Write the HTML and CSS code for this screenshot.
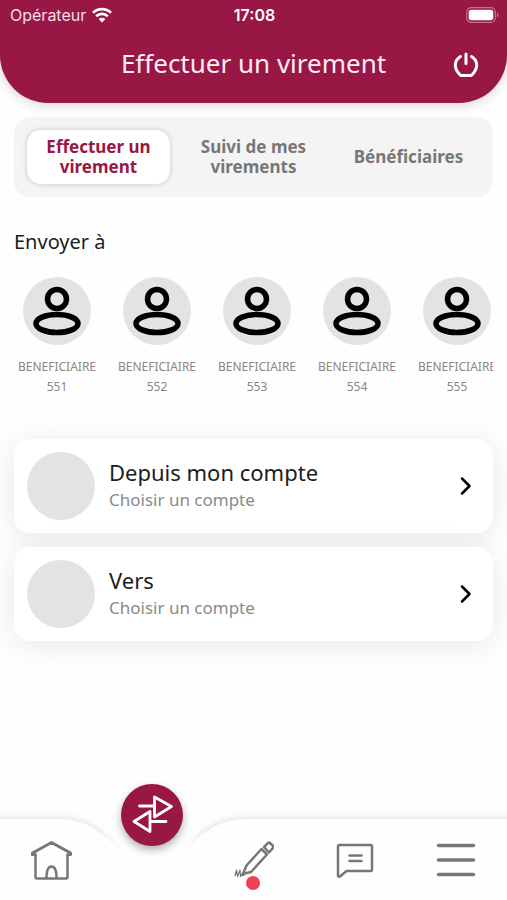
FILE: index.html
```
<!DOCTYPE html>
<html lang="fr">
<head>
<meta charset="utf-8">
<meta name="viewport" content="width=device-width, initial-scale=1">
<title>Effectuer un virement</title>
<link rel="stylesheet" href="styles.css">
</head>
<body>
<svg class="defs" width="0" height="0" aria-hidden="true">
  <symbol id="person" viewBox="0 0 68 68">
    <g fill="none" stroke="#000" stroke-width="5.500">
      <circle cx="34" cy="22" r="9.500"/>
      <ellipse cx="34" cy="46.500" rx="21" ry="9"/>
    </g>
  </symbol>
  <symbol id="chevron" viewBox="0 0 12 20">
    <path d="M2 2.500 9.500 10 2 17.500" fill="none" stroke="#000" stroke-width="2.500" stroke-linecap="round" stroke-linejoin="round"/>
  </symbol>
</svg>
<div class="app">
  <header class="header">
    <div class="status">
      <span class="carrier">Opérateur
        <svg width="20" height="16" viewBox="0 0 20 16" aria-hidden="true"><g fill="none" stroke="#fff" stroke-width="2.600"><path d="M1 5.700a13 13 0 0 1 18 0"/><path d="M4.200 9.200a8.300 8.300 0 0 1 11.600 0"/></g><path d="M10 15.500 6.600 12a4.900 4.900 0 0 1 6.800 0z" fill="#fff"/></svg>
      </span>
      <span class="time">17:08</span>
      <svg class="battery" width="33" height="16" viewBox="0 0 33 16" aria-hidden="true"><rect x=".7" y=".7" width="28.600" height="14.600" rx="4.500" fill="none" stroke="#c4718e" stroke-width="1.200"/><rect x="2.700" y="2.700" width="24.600" height="10.600" rx="2.800" fill="#fff"/><path d="M31 5.500q1.600.8 1.600 2.500T31 10.500z" fill="#c4718e"/></svg>
    </div>
    <div class="titlebar">
      <h1>Effectuer un virement</h1>
      <button class="power" aria-label="Se déconnecter">
        <svg width="26" height="26" viewBox="0 0 26 26"><g fill="none" stroke="#fff" stroke-width="3" stroke-linecap="round"><path d="M13 2V11.500"/><path d="M7.500 4.500C4.300 6.500 2.300 9.500 2.300 13.300c0 3.900 2 7 5.400 10.200h10.600c3.400-3.200 5.400-6.300 5.400-10.200 0-3.800-2-6.800-5.200-8.800" stroke-linejoin="round"/></g></svg>
      </button>
    </div>
  </header>
  <main>
    <nav class="tabs" aria-label="Virements">
      <button class="tab active">Effectuer un virement</button>
      <button class="tab">Suivi de mes virements</button>
      <button class="tab">Bénéficiaires</button>
    </nav>
    <h2>Envoyer à</h2>
    <div class="people">
      <button class="person"><svg class="avatar" aria-hidden="true"><use href="#person"/></svg><span>BENEFICIAIRE 551</span></button>
      <button class="person"><svg class="avatar" aria-hidden="true"><use href="#person"/></svg><span>BENEFICIAIRE 552</span></button>
      <button class="person"><svg class="avatar" aria-hidden="true"><use href="#person"/></svg><span>BENEFICIAIRE 553</span></button>
      <button class="person"><svg class="avatar" aria-hidden="true"><use href="#person"/></svg><span>BENEFICIAIRE 554</span></button>
      <button class="person"><svg class="avatar" aria-hidden="true"><use href="#person"/></svg><span>BENEFICIAIRE 555</span></button>
    </div>
    <div class="accounts">
      <button class="account">
        <span class="avatar"></span>
        <span class="label"><span class="name">Depuis mon compte</span><span class="hint">Choisir un compte</span></span>
        <svg width="12" height="20" aria-hidden="true"><use href="#chevron"/></svg>
      </button>
      <button class="account">
        <span class="avatar"></span>
        <span class="label"><span class="name">Vers</span><span class="hint">Choisir un compte</span></span>
        <svg width="12" height="20" aria-hidden="true"><use href="#chevron"/></svg>
      </button>
    </div>
  </main>
  <nav class="bottom" aria-label="Navigation principale">
    <svg class="bar" viewBox="0 0 507 81" preserveAspectRatio="none" aria-hidden="true">
      <defs>
        <linearGradient id="fade" gradientUnits="userSpaceOnUse" x1="0" y1="0" x2="0" y2="34"><stop offset=".3" stop-color="#fff"/><stop offset="1" stop-color="#000"/></linearGradient>
        <mask id="top" maskUnits="userSpaceOnUse" x="-10" y="-20" width="527" height="101"><rect x="-10" y="-20" width="527" height="101" fill="url(#fade)"/></mask>
        <filter id="blur" x="-10%" y="-30%" width="120%" height="160%"><feGaussianBlur stdDeviation="4"/></filter>
        <path id="shape" d="M-20 0H58C88 0 104 13 130 44V100H-20zM527 0H249C216 0 200 13 176 44V100H527z"/>
      </defs>
      <g mask="url(#top)"><use href="#shape" filter="url(#blur)" opacity=".16"/></g>
      <use href="#shape" fill="#fefefe"/>
    </svg>
    <a href="#accueil" aria-label="Accueil"><svg width="42" height="42" viewBox="0 0 42 42"><g fill="none" stroke="#777" stroke-width="2.500" stroke-linejoin="round" stroke-linecap="round"><path d="M5.500 16V38q0 1.500 1.500 1.500h29q1.500 0 1.500-1.500V16"/><path d="M2.500 15.500v-1.500L21.500 3.500 40.500 14v1.500H38" stroke-width="3"/><path d="M2.500 15.500H5.500"/><path d="M16.500 39c0-7 1.500-11.500 5-11.500s5 4.500 5 11.500"/></g></svg></a>
    <a class="transfer" href="#virements" aria-label="Virements" aria-current="page"><svg width="42" height="42" viewBox="0 0 42 42"><g fill="none" stroke="#fff" stroke-width="2.800" stroke-linejoin="round" stroke-linecap="round"><path d="M8.500 12H23M23.500 3v20L40.500 12.500z"/><path d="M35 27.500H19.500M19 37.500v-20L3 27.500z"/></g></svg></a>
    <a class="sign" href="#signature" aria-label="Signature"><svg width="42" height="42" viewBox="0 0 42 42"><g fill="none" stroke="#777" stroke-width="2.500" stroke-linejoin="round"><path d="M14.500 26.500 29.500 10l5.500 5.500-16 17.500-6.500 1.500-2 1.500z"/><path d="M32 8 36 4q1-1 2 0l3 3q1 1 0 2l-4 4.500z"/><path d="m3 37 1.500-6 1 6.500L8 31l.5 6.500 2.500-4 1.500 3" stroke-width="1.200"/></g></svg><i class="dot"></i></a>
    <a href="#messages" aria-label="Messages"><svg width="42" height="42" viewBox="0 0 42 42"><g fill="none" stroke="#777" stroke-width="2.500" stroke-linejoin="round" stroke-linecap="round"><path d="M5.500 6h31q1.500 0 1.500 1.500v23q0 1.500-1.500 1.500H12.500L6 37.500q-2 1-2-1v-29Q4 6 5.500 6z"/><path d="M15.500 16.500h12M15.500 22h12"/></g></svg></a>
    <a href="#menu" aria-label="Menu"><svg width="42" height="42" viewBox="0 0 42 42"><path d="M3.500 6.500h35M3.500 21h35M3.500 35.500h35" fill="none" stroke="#777" stroke-width="3.500" stroke-linecap="round"/></svg></a>
  </nav>
</div>
</body>
</html>
```
FILE: styles.css
```
* { box-sizing: border-box; }
body {
  margin: 0;
  background: #fefefe;
  color: #1c1c1c;
  font-family: "Noto Sans", "Open Sans", sans-serif;
}
button {
  border: 0;
  padding: 0;
  background: none;
  color: inherit;
  font: inherit;
}
svg { display: block; }
.defs { position: absolute; }
.app {
  display: flex;
  flex-direction: column;
  min-height: 100vh;
  overflow: hidden;
}
.header {
  padding-bottom: 16px;
  border-radius: 0 0 48px 48px;
  background: #991744;
  box-shadow: 0 2px 12px rgba(0, 0, 0, .16);
  color: #fff;
}
.status {
  display: grid;
  grid-template-columns: 1fr auto 1fr;
  align-items: center;
  height: 29px;
  padding: 0 8px 0 10px;
  font: 16px/20px Inter, sans-serif;
}
.carrier {
  display: flex;
  align-items: center;
  gap: 6px;
  color: #f5dfe7;
}
.time { font-weight: 600; }
.battery { justify-self: end; }
.titlebar {
  display: grid;
  grid-template-columns: 1fr auto 1fr;
  align-items: center;
  padding: 16px 28px 6px;
}
h1 {
  grid-column: 2;
  margin: 0;
  color: #fdeef3;
  font-size: 26px;
  font-weight: 400;
  line-height: 36px;
}
.power {
  justify-self: end;
  padding-top: 4px;
}
main {
  flex: 1;
  padding: 14px;
}
.tabs {
  display: grid;
  grid-template-columns: repeat(3, 1fr);
  gap: 12px;
  padding: 13px;
  border-radius: 16px;
  background: #f4f4f4;
}
.tab {
  height: 54px;
  padding: 0 12px;
  border-radius: 14px;
  color: #777;
  font-size: 17px;
  font-weight: 700;
  line-height: 20px;
}
.tab.active {
  background: #fff;
  box-shadow: 0 0 5px rgba(0, 0, 0, .2);
  color: #991744;
}
h2 {
  margin: 31px 0 21px;
  font-size: 20px;
  font-weight: 400;
  line-height: 28px;
}
.people {
  display: flex;
  gap: 14px;
  overflow: hidden;
}
.person {
  flex: 0 0 86px;
  display: flex;
  flex-direction: column;
  align-items: center;
  gap: 12px;
  color: #888;
  font-size: 12px;
  line-height: 20px;
}
.avatar {
  flex: none;
  width: 68px;
  height: 68px;
  border-radius: 50%;
  background: #e3e3e3;
}
.accounts {
  display: grid;
  gap: 14px;
  margin-top: 42px;
}
.account {
  display: flex;
  align-items: center;
  gap: 14px;
  padding: 13px 21px 13px 13px;
  border-radius: 16px;
  background: #fff;
  box-shadow: 0 4px 30px rgba(0, 0, 0, .09);
  text-align: left;
}
.label {
  flex: 1;
  display: grid;
  padding-bottom: 2px;
}
.name {
  font-size: 22px;
  line-height: 30px;
}
.hint {
  color: #8a8a8a;
  font-size: 17px;
  line-height: 26px;
}
.bottom {
  position: relative;
  display: grid;
  grid-template-columns: repeat(5, 1fr);
  grid-template-rows: 81px;
  place-items: center;
}
.bar {
  position: absolute;
  inset: 0;
  width: 100%;
  height: 100%;
  overflow: visible;
}
.bottom a { position: relative; }
.bottom .transfer {
  display: grid;
  place-items: center;
  align-self: start;
  width: 62px;
  height: 62px;
  margin-top: -35px;
  border-radius: 50%;
  background: #991744;
  box-shadow: 0 4px 8px rgba(0, 0, 0, .3);
}
.dot {
  position: absolute;
  bottom: -9px;
  left: 14px;
  width: 14px;
  height: 14px;
  border-radius: 50%;
  background: #ee4058;
}
```
